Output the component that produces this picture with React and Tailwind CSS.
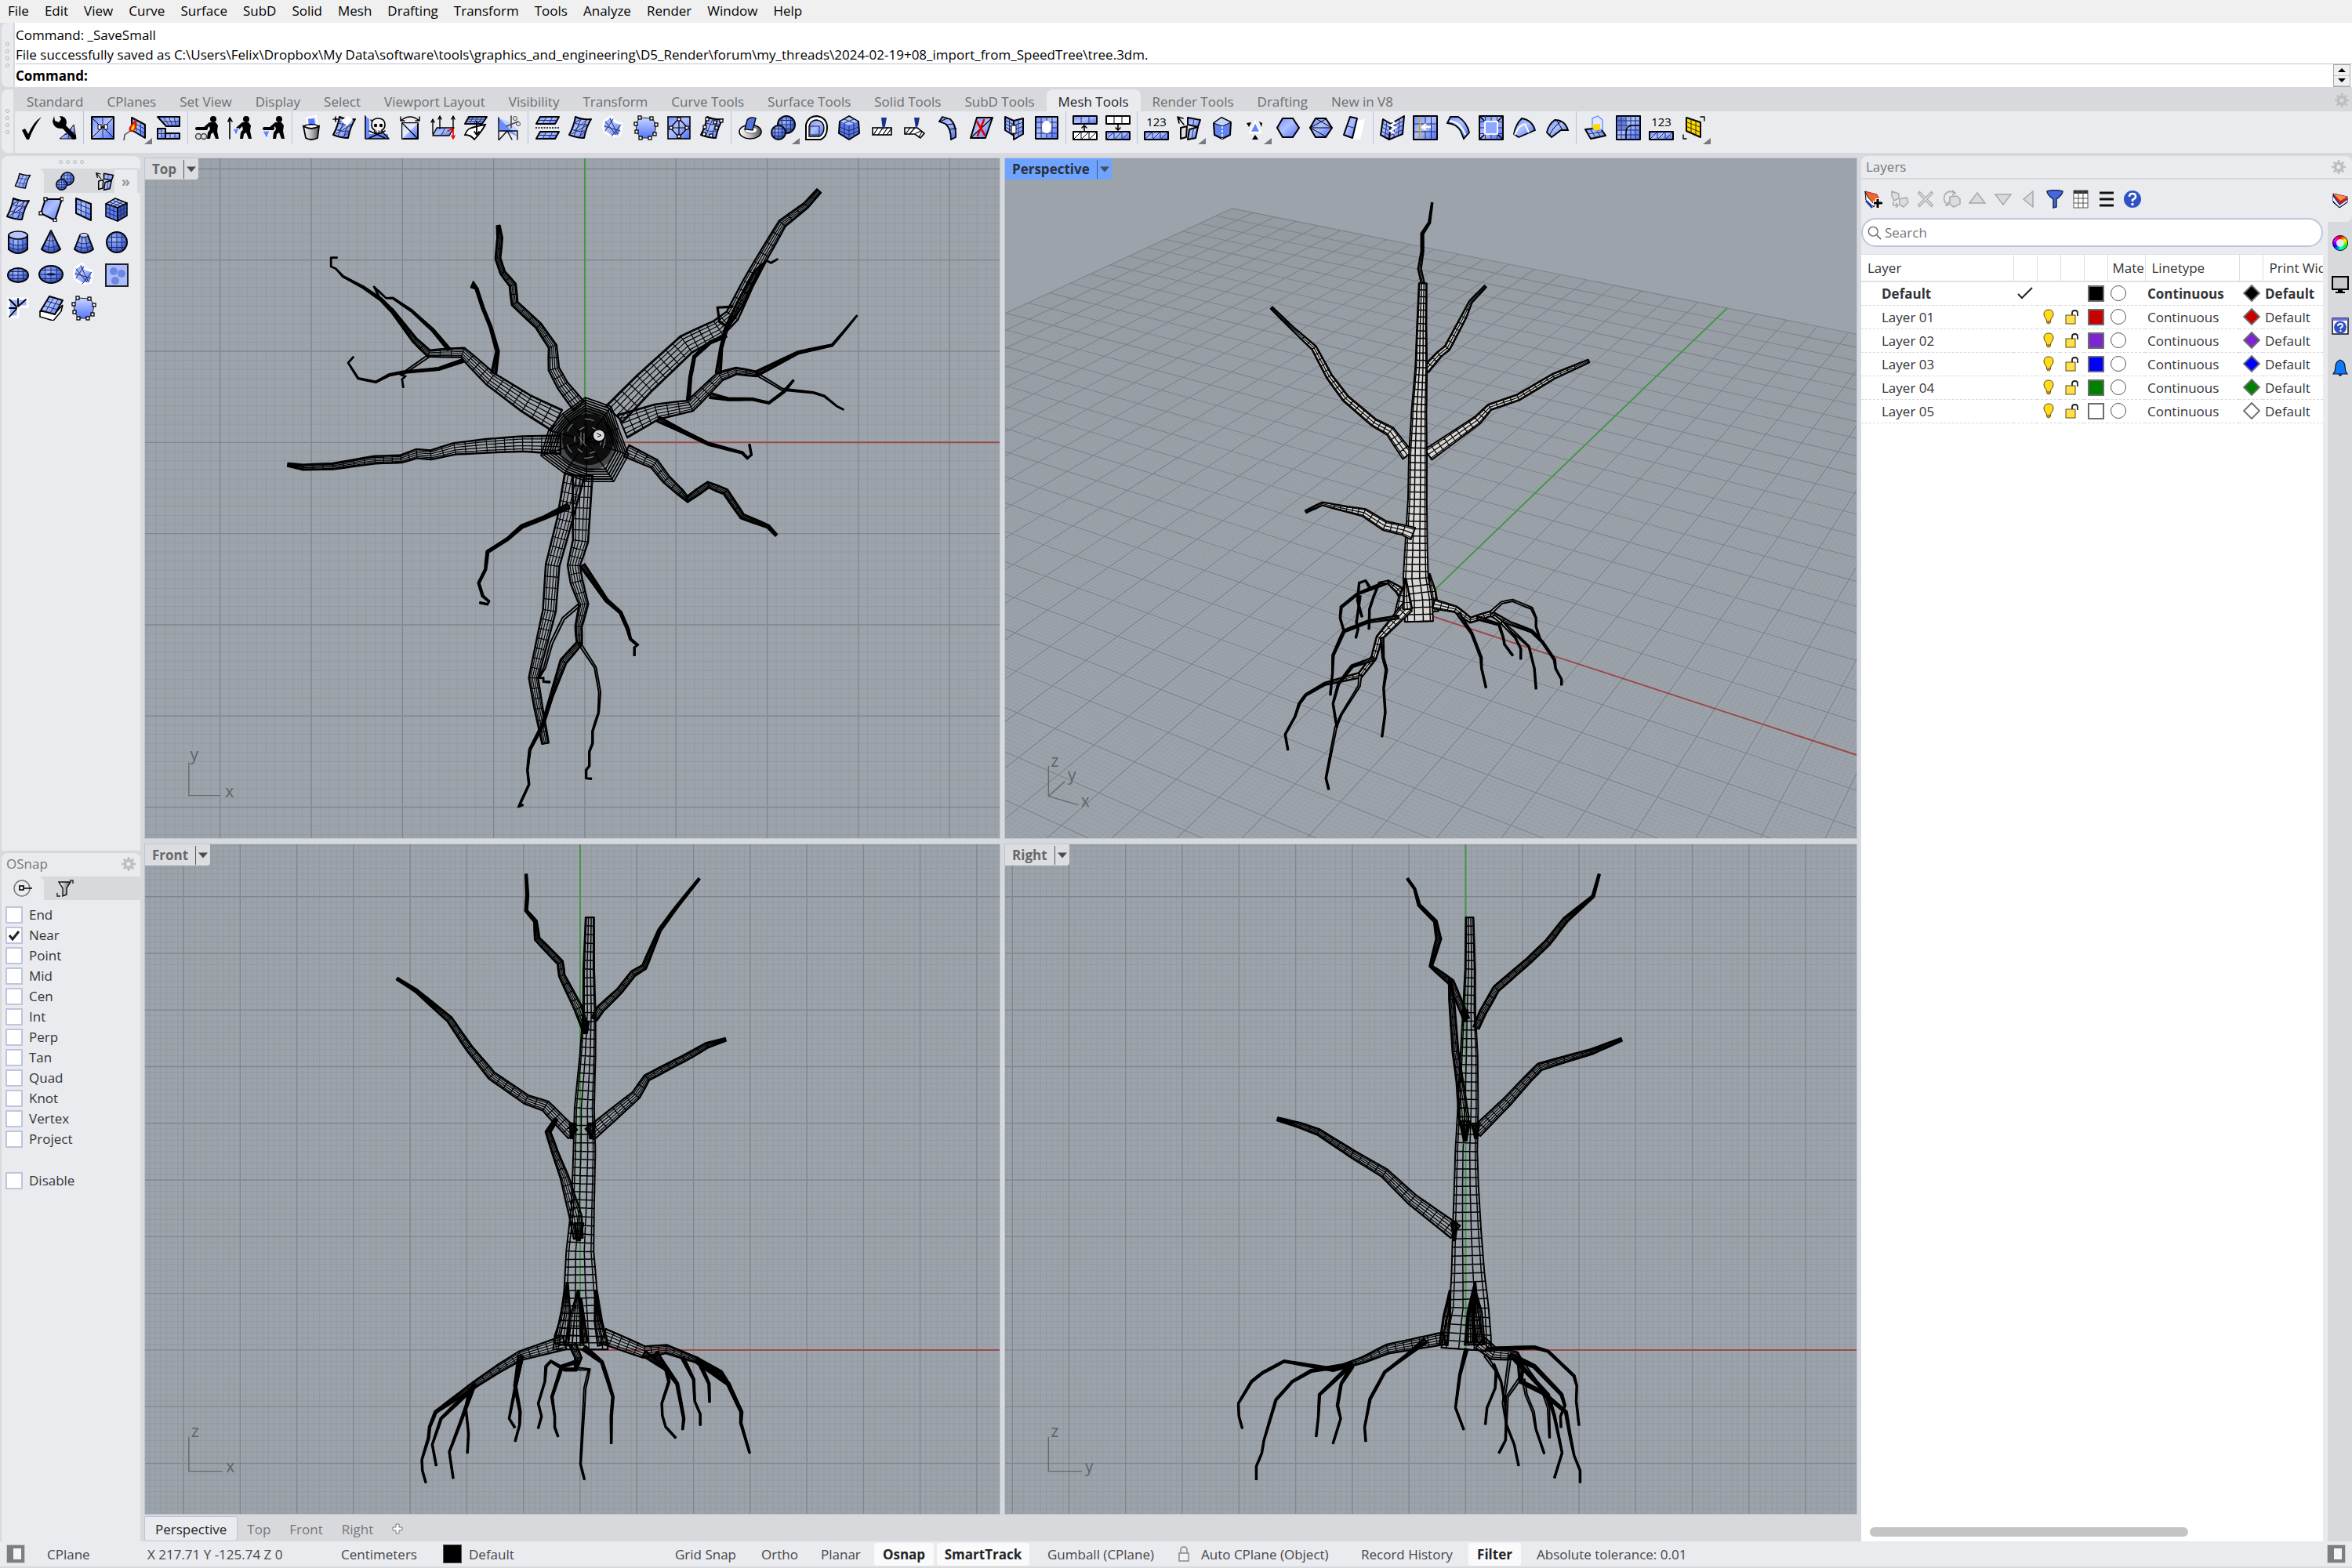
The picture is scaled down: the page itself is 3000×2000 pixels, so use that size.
import React from "react";

/* ---------- drawing helpers ---------- */

const lerp = (a, b, t) => a + (b - a) * t;
const bilerp = ([a, b, c, d], u, v) => [
  lerp(lerp(a[0], b[0], u), lerp(d[0], c[0], u), v),
  lerp(lerp(a[1], b[1], u), lerp(d[1], c[1], u), v),
];
const f1 = (n) => n.toFixed(1);
const seg = (a, b) => `M${f1(a[0])} ${f1(a[1])}L${f1(b[0])} ${f1(b[1])}`;

/* A quad covered with an n by m wire mesh */
function Quad({ p, n = 3, m = 3, fill = "url(#blue)", diag = false, sw = 2, line = "#1c2a66" }) {
  let d = "";
  for (let i = 1; i < n; i++) d += seg(bilerp(p, i / n, 0), bilerp(p, i / n, 1));
  for (let j = 1; j < m; j++) d += seg(bilerp(p, 0, j / m), bilerp(p, 1, j / m));
  if (diag)
    for (let i = 0; i < n; i++)
      for (let j = 0; j < m; j++) d += seg(bilerp(p, i / n, (j + 1) / m), bilerp(p, (i + 1) / n, j / m));
  return (
    <g>
      <polygon points={p.map((q) => q.join(",")).join(" ")} fill={fill} stroke="#000" strokeWidth={sw} strokeLinejoin="round" />
      <path d={d} stroke={line} strokeWidth="1" fill="none" />
    </g>
  );
}

const K = ({ d, w = 2, c = "#000", fill = "none" }) => (
  <path d={d} stroke={c} strokeWidth={w} fill={fill} strokeLinejoin="round" strokeLinecap="round" />
);
const Dots = ({ at }) => at.map(([x, y]) => <rect key={x + "_" + y} x={x - 2} y={y - 2} width="4" height="4" fill="#fff" stroke="#000" strokeWidth="1.3" />);
const rect = (x, y, w, h) => [[x, y], [x + w, y], [x + w, y + h], [x, y + h]];

const Sheet = ({ diag }) => (
  <g>
    <path d="M10 2 Q18 6 30 5 Q24 14 21 29 Q12 29 2 25 Q8 14 10 2Z" fill="url(#blue)" stroke="#000" strokeWidth="2" strokeLinejoin="round" />
    <path d="M17 5 Q12 16 8 27 M24 6 Q18 18 15 29 M8 10 Q16 13 26 12 M5 18 Q13 22 23 20" stroke="#1c2a66" fill="none" />
    {diag && <path d="M8 10L17 5M8 20L24 6M5 24L26 12M14 28L23 20" stroke="#1c2a66" />}
  </g>
);
const Ball = ({ cx = 16, cy = 16, rx = 13, ry = 13 }) => (
  <g>
    <ellipse cx={cx} cy={cy} rx={rx} ry={ry} fill="url(#ball)" stroke="#000" strokeWidth="2" />
    <path
      d={`M${cx} ${cy - ry}V${cy + ry}M${cx - rx / 2} ${cy - ry * 0.86}V${cy + ry * 0.86}M${cx + rx / 2} ${cy - ry * 0.86}V${cy + ry * 0.86}M${cx - rx} ${cy}H${cx + rx}M${cx - rx * 0.86} ${cy - ry / 2}H${cx + rx * 0.86}M${cx - rx * 0.86} ${cy + ry / 2}H${cx + rx * 0.86}`}
      stroke="#1c2a66"
      fill="none"
    />
  </g>
);
const Cube = ({ n = 3 }) => (
  <g>
    <Quad p={[[2, 9], [14, 2], [29, 8], [17, 14]]} n={n} m={n} fill="#bccaff" sw={1.6} />
    <Quad p={[[2, 9], [17, 14], [17, 31], [2, 25]]} n={n} m={n} fill="#5f80f0" sw={1.6} />
    <Quad p={[[17, 14], [29, 8], [29, 24], [17, 31]]} n={n} m={n} fill="#3a56b8" sw={1.6} />
  </g>
);
const Person = () => (
  <g>
    <circle cx="24" cy="5" r="4" />
    <path d="M19 9L27 9L30 13L29 20L31 30L27 30L24 22L21 24L20 30L16 30L17 22L20 18L19 14L14 19L11 16Z" />
  </g>
);
const Patch = () => <path d="M5 7L14 1L18 8L27 11L25 25L14 27L5 21L3 14Z" fill="url(#blue)" stroke="#fff" strokeWidth="3" strokeLinejoin="round" />;

const ICONS = {
  check: <path d="M4 19L8 17L12 24Q19 8 29 2Q19 14 13 31L10 31Z" />,
  wrench: (
    <g>
      <Quad p={[[28, 12], [31, 30], [10, 30], [22, 20]]} n={2} m={2} sw={1} />
      <path d="M3 1L4 7L9 9L12 5L10 1Q19 1 19 10L18 13L30 25Q33 31 27 31L14 17Q3 18 1 8Z" />
    </g>
  ),
  box: (
    <g>
      <Quad p={rect(2, 2, 28, 28)} n={2} m={1} />
      <K d="M3 4L15 16M3 28L15 16M29 4L17 16M29 28L17 16" w={1} />
      <rect x="10" y="12" width="4" height="6" fill="#fff" stroke="#000" />
      <rect x="18" y="12" width="4" height="6" fill="#fff" stroke="#000" />
      <K d="M14 15H18" w={1.5} />
    </g>
  ),
  flame: (
    <g>
      <Quad p={[[11, 3], [28, 12], [28, 29], [11, 19]]} />
      <path d="M16 5Q20 16 12 21Q6 22 8 15Z" fill="#e11900" />
      <path d="M14 11Q16 17 12 19Q9 19 11 15Z" fill="#ffd800" />
      <K d="M9 20L2 25L1 32" w={1.5} c="#444" />
    </g>
  ),
  reduce: (
    <g>
      <Quad p={[[2, 2], [30, 2], [30, 14], [13, 14]]} n={4} m={2} />
      <Quad p={rect(2, 17, 10, 13)} n={2} m={2} />
      <Quad p={rect(12, 23, 18, 7)} n={3} m={1} />
    </g>
  ),
  pushLink: (
    <g>
      <Person />
      <K d="M3 17H15" w={4} />
      <circle cx="5" cy="27" r="3.5" fill="#ddd" stroke="#444" strokeWidth="1.5" />
      <circle cx="12" cy="27" r="3.5" fill="#ddd" stroke="#444" strokeWidth="1.5" />
    </g>
  ),
  pushUp: (
    <g>
      <Person />
      <path d="M7 17H15L11 26Z" fill="#6486ff" stroke="#fff" />
      <K d="M3 30V5M1 8L3 3L6 8" w={1.6} />
    </g>
  ),
  push: (
    <g>
      <Person />
      <K d="M5 17H16" w={4} />
      <path d="M3 20H12L8 30Z" fill="#6486ff" stroke="#fff" />
    </g>
  ),
  bucket: (
    <g>
      <path d="M10 3L22 1L24 14L12 15Z" fill="#dfe6ff" stroke="#fff" strokeWidth="2" />
      <path d="M12 5L20 4L21 12L13 13Z" fill="#5577ff" />
      <path d="M6 14Q16 20 26 14L24 29Q16 33 9 29Z" fill="url(#metal)" stroke="#000" strokeWidth="1.8" />
      <path d="M6 14Q16 9 26 14" fill="none" stroke="#000" strokeWidth="1.4" />
    </g>
  ),
  addSheet: (
    <g>
      <Sheet diag />
      <path d="M12 7L20 1L27 5L20 14Z" fill="#fff" />
      <K d="M2 5H8M5 2V8" w={1.6} />
    </g>
  ),
  skull: (
    <g>
      <path d="M1 1L6 5L6 30H1Z" fill="#6a8cff" />
      <rect x="1" y="24" width="29" height="6" fill="#6a8cff" />
      <K d="M1 1V30H31L8 6M6 20L26 29M26 20L6 29" w={1.6} />
      <path d="M9 12Q9 4 17 4Q26 4 26 12Q26 17 22 19V23H13V19Q9 17 9 12Z" fill="#f4f4f4" stroke="#000" strokeWidth="1.6" />
      <circle cx="14" cy="13" r="2.2" />
      <circle cx="21" cy="13" r="2.2" />
      <K d="M15 20V23M18 20V23M20 20V23" w={1} />
    </g>
  ),
  flip: (
    <g>
      <Quad p={rect(6, 10, 20, 20)} n={1} m={1} />
      <path d="M6 10H26L6 30Z" fill="#fff" opacity=".7" />
      <K d="M6 10L26 30" w={1.2} />
      <K d="M4 7Q16 -3 28 7M28 2V7H23M4 2V7H9" w={1.4} />
    </g>
  ),
  normals: (
    <g>
      <Quad p={[[8, 16], [30, 16], [24, 26], [3, 26]]} n={2} m={1} sw={1.4} />
      <K d="M3 24V7M1 9L3 5L5 9M12 17V3M10 5L12 1L14 5M29 16V3M27 5L29 1L31 5" w={1.4} />
      <K d="M29 17V29M27 26L29 30L31 26M22 20L29 17" w={1.6} c="#e00" />
    </g>
  ),
  drape: (
    <g>
      <Quad p={[[7, 2], [30, 2], [24, 11], [2, 11]]} n={4} m={3} />
      <path d="M8 17Q16 14 28 12Q24 20 14 31Q10 25 2 25Q5 18 8 17Z" fill="#fff" stroke="#000" strokeWidth="1.8" />
      <K d="M17 8V24M14 21L17 25L20 21" w={1.8} />
    </g>
  ),
  cut: (
    <g>
      <path d="M4 4L27 28V18L16 8Z" fill="#c3cfff" />
      <path d="M2 2L4 19L14 21L27 27Z" fill="#6a8cff" />
      <K d="M3 3V31M3 20H27L14 20L3 32M27 20V31M14 20L20 31" w={1.3} />
      <K d="M19 1L19 16M28 8L13 14" w={1.6} c="#444" />
      <circle cx="28" cy="11" r="2.5" fill="none" stroke="#444" />
      <circle cx="24" cy="4" r="2.5" fill="none" stroke="#444" />
    </g>
  ),
  twoLayers: (
    <g>
      <Quad p={[[7, 2], [31, 2], [26, 11], [2, 11]]} n={3} m={2} />
      <path d="M1 16H31" stroke="#000" strokeWidth="1.6" strokeDasharray="2 1.5" />
      <Quad p={[[7, 21], [31, 21], [26, 30], [2, 30]]} n={3} m={2} />
    </g>
  ),
  sheet: <Sheet />,
  sheetDiag: <Sheet diag />,
  patch: (
    <g>
      <Patch />
      <K d="M6 8L20 25M6 20L16 5M14 27L26 12M5 14L25 20M12 4L22 25" w={1} c="#1c2a66" />
    </g>
  ),
  points: (
    <g>
      <path d="M8 3L24 4L29 12L27 23L21 29L9 29L4 21L3 11Z" fill="url(#blueV)" stroke="#222" strokeWidth="1" />
      <Dots at={[[8, 3], [23, 4], [29, 12], [27, 24], [21, 29], [9, 29], [4, 21], [3, 11]]} />
    </g>
  ),
  diamond: (
    <g>
      <rect x="2" y="2" width="28" height="28" fill="url(#blue)" stroke="#000" strokeWidth="1.6" />
      <K d="M16 4L27 16L16 28L5 16ZM16 5V27M5 16H27" w={1.2} />
      <Dots at={[[16, 5], [26, 16], [16, 27], [6, 16]]} />
    </g>
  ),
  sheetPoints: (
    <g>
      <Sheet />
      <Dots at={[[10, 5], [20, 9], [28, 7], [7, 15], [22, 16], [6, 24], [15, 26]]} />
    </g>
  ),
  ring: (
    <g>
      <ellipse cx="16" cy="21" rx="14" ry="9" fill="url(#metal)" stroke="#000" strokeWidth="1.6" />
      <ellipse cx="17" cy="19" rx="8" ry="4" fill="#fff" stroke="#666" />
      <path d="M12 6Q16 1 23 4L19 19L9 18Z" fill="#5373dd" stroke="#000" strokeWidth="1.4" />
    </g>
  ),
  balls: (
    <g>
      <Ball cx={20} cy={12} rx={11} ry={11} />
      <Ball cx={10} cy={22} rx={9} ry={9} />
    </g>
  ),
  offset: (
    <g>
      <path d="M3 12Q6 1 17 1Q30 3 30 16Q30 27 22 31H3Z" fill="#fff" stroke="#000" strokeWidth="2" />
      <path d="M7 14Q9 6 17 6Q26 8 26 16Q26 24 20 27H7Z" fill="url(#blue)" stroke="#000" strokeWidth="1.4" />
      <rect x="8" y="14" width="12" height="11" fill="none" stroke="#223" />
    </g>
  ),
  roundCube: (
    <g>
      <path d="M4 8L16 1L28 8L29 23L16 31L3 23Z" fill="#5877e8" stroke="#000" strokeWidth="2" strokeLinejoin="round" />
      <path d="M5 8L16 2L27 8L16 13Z" fill="#b5c4ff" />
      <K d="M16 13V30M10 11V27M22 11V27M4 15L16 20L28 15M4 20L16 25L28 20M10 5L22 10M22 5L10 10" w={1} c="#1c2a66" />
    </g>
  ),
  pinDown: (
    <g>
      <rect x="4" y="16" width="24" height="9" fill="#fff" stroke="#000" strokeWidth="1.6" />
      <K d="M5 25L11 16M11 25L17 16M17 25L23 16M22 25L28 17" w={1.2} />
      <path d="M15 3H22L20 14L17 19Z" fill="#1b2f8c" />
    </g>
  ),
  pinBend: (
    <g>
      <path d="M3 16H19L28 23L23 29L16 24H3Z" fill="#fff" stroke="#000" strokeWidth="1.6" />
      <K d="M4 24L10 16M9 24L16 16M17 23L24 20M21 28L25 21" w={1.2} />
      <path d="M15 3H22L20 13L17 17Z" fill="#1b2f8c" />
    </g>
  ),
  bend: (
    <g>
      <path d="M9 2L19 5Q27 12 26 28L20 31Q20 17 13 11L5 8Z" fill="url(#blue)" stroke="#000" strokeWidth="1.8" />
      <K d="M6 8L15 4M14 12L24 11M18 18L27 17" w={1} />
    </g>
  ),
  quadX: (
    <g>
      <Quad p={[[11, 3], [31, 3], [22, 29], [3, 29]]} n={1} m={1} />
      <K d="M3 29L31 3" w={1.2} />
      <K d="M11 8L21 25M20 6L12 26" w={2.6} c="#e00000" />
    </g>
  ),
  slab: (
    <g>
      <Quad p={[[5, 2], [16, 7], [16, 26], [5, 19]]} n={2} m={4} />
      <Quad p={[[16, 7], [28, 4], [28, 24], [16, 31]]} n={2} m={4} />
      <rect x="13" y="13" width="6" height="10" fill="#fff" stroke="#000" />
    </g>
  ),
  hole: (
    <g>
      <Quad p={rect(2, 2, 28, 28)} n={4} m={4} />
      <ellipse cx="16" cy="15" rx="6" ry="8" fill="#fff" />
    </g>
  ),
  up: (
    <g>
      <Quad p={rect(1, 1, 30, 10)} n={3} m={1} />
      <Quad p={rect(1, 21, 30, 10)} n={3} m={1} diag fill="#fff" line="#000" />
      <K d="M15 20V14M12 16L15 13L18 16" w={1.6} />
    </g>
  ),
  down: (
    <g>
      <Quad p={rect(1, 1, 30, 10)} n={3} m={1} fill="#fff" line="#000" />
      <Quad p={rect(1, 21, 30, 10)} n={3} m={1} diag />
      <K d="M16 12V18M13 16L16 19L19 16" w={1.6} />
    </g>
  ),
  count: (
    <g>
      <text x="16" y="14" textAnchor="middle" fontSize="15" fontFamily="Open Sans, sans-serif">123</text>
      <Quad p={rect(1, 21, 30, 10)} n={3} m={1} diag />
    </g>
  ),
  match: (
    <g>
      <Quad p={[[14, 3], [30, 6], [27, 15], [14, 12]]} n={2} m={1} />
      <Quad p={[[16, 18], [27, 15], [24, 29], [14, 31]]} n={2} m={1} />
      <Quad p={[[5, 16], [13, 14], [12, 28], [5, 30]]} n={1} m={1} fill="#ddd" />
      <K d="M3 10L1 2M1 2L8 4M1 2L9 12" w={1.6} />
    </g>
  ),
  dashCube: (
    <g>
      <path d="M5 10L15 3L27 9L26 25L16 30L6 25Z" fill="#6283f0" stroke="#000" strokeWidth="2" strokeLinejoin="round" />
      <path d="M5 10L15 3L27 9L16 14Z" fill="#c6d2ff" stroke="#000" />
      <path d="M16 14V30" stroke="#fff" strokeWidth="1.5" strokeDasharray="3 2" />
    </g>
  ),
  tri: (
    <g>
      <path d="M16 8L23 22H9Z" fill="#6486ff" stroke="#fff" strokeWidth="2.5" />
      <path d="M16 25L20 31H12ZM5 10L11 9L8 15ZM21 8L25 10L24 15Z" />
    </g>
  ),
  hex: <path d="M9 4H22L30 16L22 28H9L2 16Z" fill="url(#blue)" stroke="#000" strokeWidth="2" />,
  hexTri: (
    <g>
      <path d="M9 4H22L30 16L22 28H9L2 16Z" fill="url(#blue)" stroke="#000" strokeWidth="2" />
      <K d="M2 16H30M2 16L22 5M2 16L22 27M9 4L30 16" w={1} />
    </g>
  ),
  panel: (
    <g>
      <path d="M12 8L30 5L24 31L9 30Z" fill="#fff" />
      <Quad p={[[11, 2], [20, 4], [14, 29], [3, 25]]} n={1} m={2} />
    </g>
  ),
  unroll: (
    <g>
      <Quad p={[[4, 5], [14, 11], [12, 31], [1, 25]]} n={2} m={4} />
      <Quad p={[[14, 11], [31, 1], [29, 24], [12, 31]]} n={3} m={4} />
      <path d="M14 6L19 10L13 13L20 16L13 20L19 23" fill="none" stroke="#fff" strokeWidth="2.4" />
    </g>
  ),
  split: (
    <g>
      <Quad p={rect(1, 1, 30, 30)} n={4} m={3} />
      <path d="M9 2V30" stroke="#e3c000" strokeWidth="1.6" />
      <path d="M23 15H13M17 11L12 15L17 19" stroke="#fff" strokeWidth="2.4" fill="none" />
    </g>
  ),
  arc: (
    <g>
      <path d="M6 2H16Q27 9 30 22L23 30L19 20Q14 11 2 10Z" fill="url(#blue)" stroke="#000" strokeWidth="1.8" />
      <path d="M5 7Q19 9 25 25" stroke="#fff" strokeWidth="2.2" fill="none" />
    </g>
  ),
  frame: (
    <g>
      <Quad p={rect(1, 1, 30, 30)} n={4} m={4} />
      <rect x="8" y="8" width="16" height="16" fill="#8fa8ff" stroke="#fff" strokeWidth="1.8" />
      <K d="M2 2L7 7M30 2L25 7M2 30L7 25M30 30L25 25" w={1.6} />
    </g>
  ),
  fin: (
    <g>
      <path d="M13 4Q26 6 30 19L21 23L9 28L3 24Q5 12 13 4Z" fill="url(#blue)" stroke="#000" strokeWidth="1.8" />
      <path d="M4 25Q9 13 17 11M17 11L22 22" fill="none" stroke="#fff" strokeWidth="2" />
    </g>
  ),
  finGrid: (
    <g>
      <path d="M13 6Q26 6 30 19L21 19L9 28L3 22Q5 12 13 6Z" fill="url(#blue)" stroke="#000" strokeWidth="1.8" />
      <K d="M6 26Q11 15 21 8M16 7L23 19" w={1} />
    </g>
  ),
  boxSheet: (
    <g>
      <Quad p={[[3, 18], [22, 16], [29, 26], [10, 30]]} n={3} m={2} />
      <path d="M12 4L19 1L25 6V18L17 20L12 16Z" fill="#e3e9ff" stroke="#6a8cff" strokeWidth="1.4" />
      <path d="M11 12L22 11L22 18L15 20Z" fill="#ffd800" />
    </g>
  ),
  gridCurve: (
    <g>
      <Quad p={rect(1, 1, 30, 30)} n={5} m={5} />
      <path d="M13 30V22Q13 13 22 13H30" fill="none" stroke="#000" strokeWidth="1.4" />
      <path d="M3 3H12V20H3Z" fill="#2c46a8" opacity=".5" />
    </g>
  ),
  yellow: (
    <g>
      <Quad p={[[6, 3], [24, 9], [24, 28], [6, 20]]} fill="#ffdc00" line="#443300" />
      <K d="M24 2H29V7M2 25V30H6" w={1.4} />
    </g>
  ),
  poly: (
    <g>
      <path d="M9 3L30 3L21 30L3 21Z" fill="url(#blue)" stroke="#000" strokeWidth="2" />
      <Dots at={[[9, 3], [30, 3], [21, 30], [3, 21]]} />
    </g>
  ),
  plane: <Quad p={[[6, 2], [25, 9], [25, 30], [6, 21]]} />,
  cube: <Cube />,
  cylinder: (
    <g>
      <path d="M4 7V25Q16 35 28 25V7Z" fill="url(#ball)" stroke="#000" strokeWidth="2" />
      <ellipse cx="16" cy="7" rx="12" ry="5" fill="#b8c6ff" stroke="#000" strokeWidth="1.6" />
      <K d="M10 12V29M16 12V30M22 12V29M4 17Q16 24 28 17M4 22Q16 29 28 22" w={1} c="#1c2a66" />
    </g>
  ),
  cone: (
    <g>
      <path d="M16 1L28 25Q16 34 4 25Z" fill="url(#ball)" stroke="#000" strokeWidth="2" strokeLinejoin="round" />
      <K d="M16 2L12 29M16 2L21 29M11 13Q16 16 21 13M7 20Q16 25 25 20" w={1} c="#1c2a66" />
    </g>
  ),
  coneCut: (
    <g>
      <path d="M11 7L4 25Q16 34 28 25L21 7Z" fill="url(#ball)" stroke="#000" strokeWidth="2" strokeLinejoin="round" />
      <ellipse cx="16" cy="7" rx="5" ry="2.5" fill="#cbd6ff" stroke="#000" />
      <K d="M14 9L12 29M18 9L21 29M8 16Q16 20 24 16M6 21Q16 26 26 21" w={1} c="#1c2a66" />
    </g>
  ),
  sphere: <Ball />,
  ellipsoid: <Ball rx={13} ry={9} />,
  torus: (
    <g>
      <Ball cy={15} rx={15} ry={11} />
      <path d="M9 15Q16 11 23 15Q16 18 9 15Z" fill="#0b1a55" />
    </g>
  ),
  height: (
    <g>
      <rect x="2" y="2" width="28" height="28" fill="#a9bcff" stroke="#222" strokeWidth="2" />
      <circle cx="12" cy="11" r="5" fill="#4a64c8" opacity=".6" />
      <circle cx="22" cy="14" r="5" fill="#4a64c8" opacity=".6" />
      <circle cx="14" cy="23" r="5" fill="#4a64c8" opacity=".6" />
    </g>
  ),
  lPatch: (
    <g>
      <path d="M4 4H28V14H16V27H4Z" fill="#9db2ff" stroke="#fff" strokeWidth="3" />
      <K d="M5 5L14 14M16 4V13M16 14L26 5M5 16H14M5 27L14 17" w={1.8} />
    </g>
  ),
  stack: (
    <g>
      <path d="M2 20L22 22L31 12L29 20L19 32L2 27Z" fill="#fff" stroke="#000" strokeWidth="1.6" />
      <Quad p={[[14, 1], [31, 6], [21, 24], [3, 19]]} n={3} m={3} />
    </g>
  ),
};

function Icon({ name, className = "size-8" }) {
  return (
    <svg viewBox="0 0 32 32" className={className} aria-hidden="true">
      {ICONS[name]}
    </svg>
  );
}

function Gradients() {
  return (
    <svg className="absolute size-0" aria-hidden="true">
      <defs>
        <linearGradient id="blue" x1="0" y1="0" x2="1" y2="1">
          <stop offset="0" stopColor="#6f8fff" />
          <stop offset=".45" stopColor="#b0c1ff" />
          <stop offset="1" stopColor="#4a6cf5" />
        </linearGradient>
        <linearGradient id="blueV" x1="0" y1="0" x2="0" y2="1">
          <stop offset="0" stopColor="#c8d4ff" />
          <stop offset="1" stopColor="#5578ff" />
        </linearGradient>
        <radialGradient id="ball" cx=".4" cy=".35" r=".7">
          <stop offset="0" stopColor="#a9bbff" />
          <stop offset=".6" stopColor="#5b7be6" />
          <stop offset="1" stopColor="#2c459c" />
        </radialGradient>
        <linearGradient id="metal" x1="0" y1="0" x2="1" y2="0">
          <stop offset="0" stopColor="#fff" />
          <stop offset=".5" stopColor="#bbb" />
          <stop offset="1" stopColor="#555" />
        </linearGradient>
      </defs>
    </svg>
  );
}

/* ---------- tree geometry ---------- */

const parse = (text) => {
  let w = 4;
  return text
    .trim()
    .split(/\s+/)
    .map((t) => {
      const [x, y, ww] = t.split(",").map(Number);
      if (ww) w = ww;
      return [x, y, w];
    });
};

/* Tapered tube drawn as long edges plus cross rings; thin ends collapse to a solid line */
function tube(text, map, lines, step) {
  const raw = parse(text).map(([x, y, w]) => [...map(x, y), w < 7 ? Math.max(0.8, w * 0.9 - 1.2) : w]);
  const pts = [];
  raw.forEach((p, i) => {
    if (i === raw.length - 1) return pts.push(p);
    const q = raw[i + 1];
    const k = Math.max(1, Math.round(Math.hypot(q[0] - p[0], q[1] - p[1]) / step));
    for (let j = 0; j < k; j++) pts.push([lerp(p[0], q[0], j / k), lerp(p[1], q[1], j / k), lerp(p[2], q[2], j / k)]);
  });
  const nrm = pts.map((p, i) => {
    const a = pts[Math.max(0, i - 1)];
    const b = pts[Math.min(pts.length - 1, i + 1)];
    const l = Math.hypot(b[0] - a[0], b[1] - a[1]) || 1;
    return [-(b[1] - a[1]) / l, (b[0] - a[0]) / l];
  });
  const side = (s) => pts.map((p, i) => [p[0] + (nrm[i][0] * p[2] * s) / 2, p[1] + (nrm[i][1] * p[2] * s) / 2]);
  const poly = (q) => "M" + q.map((c) => f1(c[0]) + " " + f1(c[1])).join("L");
  const left = side(-1);
  const right = side(1);
  let inner = "";
  if (Math.max(...pts.map((p) => p[2])) > 4)
    for (let k = 1; k < lines; k++) inner += poly(side(-Math.cos((Math.PI * k) / lines)));
  pts.forEach((p, i) => {
    if (p[2] > 5) inner += seg(left[i], right[i]);
  });
  return { body: poly([...left, ...right.slice().reverse()]) + "Z", inner };
}

function Tubes({ list, map, fill, lines, step, width }) {
  return list.map((b, i) => {
    const t = tube(b, map, lines, step);
    return (
      <g key={i}>
        <path d={t.body} fill={fill} strokeWidth="2" />
        <path d={t.inner} fill="none" strokeWidth={width} />
      </g>
    );
  });
}

function Tree({ trunk = [], branches, map, fill = "none", step = 11, lines = 7 }) {
  return (
    <g strokeLinejoin="round" strokeLinecap="round" stroke="#000">
      <Tubes list={branches} map={map} fill={fill} lines={lines} step={step} width="1.2" />
      <Tubes list={trunk} map={map} fill={fill} lines={5} step={step} width="1.5" />
    </g>
  );
}

const mapper = (ox, oy, sx, sy) => (x, y) => [ox + x * sx, oy + y * sy];

const TOP = [
  "870,590,30 945,515,28 1050,420,26 1130,380,22 1165,350,18 1205,270,15 1245,200,13 1290,125,11 1350,80,8 1382,45,7",
  "780,570,18 740,520,15 718,480,14 715,425,11 680,375,9 620,320,9 615,275,9 590,245,7 578,210,7 583,160,7 579,130,6",
  "568,490,7 577,437,6 560,378,5 540,330,5 525,285,5 516,268,3 512,280 528,285",
  "725,605,30 650,565,24 560,505,18 490,440,13 405,442,9 370,410,7 315,340,6 285,310,5 240,280,4 190,254,3 172,235,2 160,230 160,208 175,208",
  "455,432,6 415,385,5 362,338,4 315,307,3 298,307,2 268,279 285,312",
  "490,460,6 430,480,5 340,488,4 305,495,4 272,512,3 228,503 203,465,2 216,451",
  "405,448,5 335,495,4 347,498,2 338,505 341,525",
  "735,665,24 640,663,20 550,668,18 470,675,15 410,690,12 375,687,12 335,700,10 270,702,10 165,718,8 90,720,7 52,714,6",
  "890,620,32 975,585,20 1060,570,15 1135,498,12 1175,485,9 1225,492,7 1330,440,5 1415,422,4 1445,388,3 1477,350,2",
  "1225,492,5 1290,530,4 1368,538,3 1395,546 1428,572,2 1443,579",
  "1110,545,7 1155,554,5 1215,554,4 1257,563,4 1295,535,4 1318,508,3",
  "1055,555,6 1060,500,5 1070,450,5 1110,415,5 1150,400,4",
  "1130,490,7 1137,430,5 1150,380,6 1185,320,9 1225,245,7 1250,215,2 1262,221 1278,212",
  "1165,328,3 1128,330 1133,365 1150,375",
  "980,603,7 1040,632,6 1105,663,5 1190,685,4 1203,698,4 1213,690,3 1208,665",
  "900,680,16 970,712,13 1000,750,11 1053,798,8 1105,763,8 1148,780,8 1190,840,7 1255,865,6 1275,886,5",
  "770,740,26 745,850,20 715,960,18 707,1070,17 690,1140,15 667,1235,12 680,1310,11 697,1395,9",
  "790,740,26 785,900,20 768,960,16 775,1000,16 793,1055,12 780,1110,9 782,1150,8 742,1195,9 712,1280,6 690,1350,5 658,1410,4 652,1460,3 656,1495 637,1535 630,1550 640,1545",
  "782,1150,5 822,1210,4 833,1270,4 830,1320,3 815,1365 815,1395 807,1415 807,1450 799,1460 799,1480 812,1481",
  "780,1058,5 742,1090,5 712,1150,5 695,1210,4 680,1235,3 692,1235 692,1244 708,1245",
  "755,815,7 695,843,6 638,865,6 603,895,5 552,927,5 547,970,4 530,1003,4 540,1035,4 556,1048,3 552,1055 533,1051",
  "790,960,7 850,1045,6 885,1075,5 903,1115,5 910,1140,4 928,1155,4 920,1160,3 920,1180",
];
const TOP_RING = [[797, 550], [862, 572], [880, 625], [905, 690], [868, 755], [800, 755], [745, 735], [686, 692], [705, 630], [740, 590]];

const FRONT_TRUNK = [
  "816,181,11 814,300,14 815,400,16 812,500,20 806,620,25 806,720,28 803,850,29 798,950,35 799,1040,42 800,1110,54 799,1145,66 799,1176,70",
];
const FRONT = [
  "808,440,8 795,390,11 765,315,8 762,285,8 720,230,7 717,190,6 700,165,5 702,130,5 700,82,4",
  "824,415,8 835,392,10 870,350,8 895,310,8 915,295,7 943,210,6 975,155,5 1015,92,4",
  "785,680,16 735,615,14 700,600,12 637,545,11 595,480,9 560,415,8 500,350,6 465,322,5",
  "816,680,18 900,590,12 920,550,9 1000,497,8 1030,475,7 1063,462,6",
  "795,920,12 790,870,16 770,780,11 752,720,8 740,675,7 755,645,6",
  "808,448,6 809,420,8", "783,690,5 785,655,8", "818,690,5 819,655,10", "795,925,6 796,885,12",
  "775,1022,3 772,1090,12 764,1165,18", "795,1040,3 790,1100,14 788,1165,24", "826,1040,3 830,1110,8 840,1165,14", "800,1060,3 806,1160,9",
  "770,1160,18 690,1190,12 650,1220,10 608,1255,8 535,1320,5 524,1355,4 522,1380,4 510,1430,3 511,1455 517,1482",
  "608,1258,6 545,1335,4 529,1395,3 536,1443", "605,1258,6 580,1345,4 560,1412,3 567,1472", "597,1270,5 590,1310,3 595,1370 593,1414",
  "690,1190,7 680,1260,5 689,1320,4 688,1350,3 680,1387", "690,1200,6 680,1265,4 669,1335,3 679,1355",
  "785,1165,9 795,1195,9 790,1222,6 770,1222,5 745,1203,4 736,1215,4 734,1250,3 722,1300 728,1330 722,1357",
  "795,1203,6 765,1215,5 747,1285,4 752,1330,3 752,1355 758,1376", "790,1220,4 815,1222,4 807,1265,4 799,1440,3 806,1475",
  "805,1172,7 838,1205,5 847,1240,5 858,1285,4 855,1330,4 855,1392,3",
  "840,1145,20 915,1182,15 955,1175,11 1010,1200,7 1055,1228,5 1068,1255,5 1092,1320,5 1091,1345,4 1107,1414,3",
  "915,1185,8 955,1222,5 960,1250,4 947,1300,3 948,1328 954,1354 972,1379", "935,1185,7 975,1255,5 987,1335,4 985,1360,3",
  "985,1195,6 1005,1245,4 1007,1295,3 1017,1325 1017,1350", "1015,1205,6 1033,1255,4 1034,1297,3", "1010,1200,7 1068,1255,6 1092,1320,4",
];

const RIGHT_TRUNK = [
  "856,181,10 857,300,13 855,400,16 855,500,22 853,620,26 850,720,28 850,800,31 851,900,36 853,1000,42 855,1080,50 852,1140,60 850,1176,64",
];
const RIGHT = [
  "850,415,8 822,330,8 785,293,6 799,230,7 793,190,6 763,152,5 755,115,4 742,92,4",
  "868,435,8 880,400,9 905,345,9 965,280,8 1000,238,8 1032,187,7 1083,132,5 1094,82,4",
  "868,675,15 925,605,12 965,550,10 985,525,10 1030,508,8 1080,490,7 1135,462,6",
  "830,905,20 750,830,15 700,770,12 640,725,10 578,675,8 545,660,7 503,645,6",
  "848,695,6 845,640,13 838,560,9 830,490,8 823,370,7 820,322,5",
  "848,690,5 849,650,12", "868,690,5 867,655,10", "828,925,4 828,885,8", "849,420,4 847,395,8",
  "820,1040,3 814,1100,9 808,1165,11", "866,1022,3 862,1090,14 864,1165,24", "866,1040,3 870,1090,12 874,1165,14", "864,1050,3 858,1100,8 860,1160,14",
  "810,1150,16 705,1175,12 660,1200,8 605,1222,6 515,1203,4 475,1230,4 455,1250,4 431,1300,3 432,1330 438,1357",
  "640,1210,6 565,1225,5 530,1250,4 500,1292,4 478,1385,3 474,1415 464,1445 464,1475", "635,1215,6 580,1280,4 578,1330,3 574,1376",
  "640,1215,6 620,1255,4 613,1305,4 619,1335,3 605,1392", "775,1155,7 740,1190,5 700,1228,4 673,1290,4 663,1355,3 665,1387",
  "850,1175,6 838,1235,4 830,1310,3 845,1360",
  "875,1160,18 900,1185,16 940,1190,11 950,1210,8 950,1250,6 990,1275,6 1033,1320,5 1040,1370,4 1048,1420,3 1059,1455 1059,1482",
  "890,1175,6 975,1171,5 1000,1180,4 1048,1237,4 1053,1260,3 1052,1295 1057,1350", "930,1190,7 975,1215,6 1025,1280,5 1031,1305,4 1023,1330,3 1024,1355",
  "940,1200,6 1000,1280,5 1012,1330,4 1026,1414,3 1012,1471", "885,1190,5 905,1225,4 903,1265,3 888,1310 885,1348",
  "930,1190,5 918,1300,4 924,1350,3 938,1395 946,1443", "900,1210,4 914,1250,3 920,1295", "950,1240,5 925,1285,4 922,1385,3 910,1414",
  "955,1245,5 960,1280,4 973,1320,4 978,1360,3 993,1415", "955,1210,5 990,1270,4 1001,1310 1003,1379,3",
];

const PERSP_TRUNK = ["770,288,10 768,380,12 767,480,15 763,580,19 761,680,23 760,780,24 758,880,28 757,960,32 762,1010,35 763,1058,36"];
const PERSP_BACK = [
  "740,1010,12 725,985,9 706,968,6 650,995,4 620,1025,4 618,1050,3 625,1080", "706,968,5 690,970,3 680,1000 672,1030 671,1075",
  "658,1047,3 650,1010 653,970 665,965 672,980,4", "655,1000,3 648,1060 651,1075 647,1095",
  "742,960,3 735,1000,12 730,1040,16", "782,950,3 788,990,8 792,1035,10",
];
const PERSP = [
  "770,288,6 764,255,6 769,215,5 769,175,5 782,150,4 787,105,3",
  "775,485,10 800,450,8 815,435,8 845,365,7 858,330,6 885,295,5",
  "780,678,16 870,600,11 893,570,8 945,548,8 1010,500,7 1075,465,6",
  "742,680,15 710,625,12 680,605,10 628,550,9 598,500,8 570,435,7 530,390,6 492,344,5",
  "790,1018,12 830,1030,8 857,1055,7 895,1040,7 930,1062,6 970,1080,5 990,1105,4 1012,1145 1014,1165,3 1025,1190 1025,1202",
  "895,1038,5 915,1015,4 935,1010 970,1028 978,1050,3 978,1070 986,1100", "835,1040,6 860,1085,4 877,1140 878,1165,3 886,1208",
  "900,1045,5 935,1080,4 965,1115,3 975,1165 978,1211", "870,1050,6 910,1065,4 918,1095,3 920,1110 935,1135", "915,1060,5 940,1095,3 950,1120 950,1143",
];
const PERSP_OVER = [
  "752,858,16 735,850,13 700,840,12 662,810,10 630,802,7 585,790,6 555,808,5",
  "742,1025,15 690,1095,8 680,1140,7 655,1180,7 590,1200,5 555,1225,4 543,1245,4 535,1275,3 517,1315 522,1350",
  "655,1180,5 653,1205,4 620,1270,3 610,1300,4 592,1415,3 597,1440", "680,1143,6 640,1160,5 615,1200,4 605,1245,3 610,1285 612,1298",
  "695,1095,6 697,1140,4 703,1168 698,1210,3 701,1265 695,1320", "725,1048,6 670,1058,5 625,1080,5 605,1135,4 604,1175,3 600,1225",
  "738,960,3 740,1000,8 742,1030,12",
];

/* ---------- viewports ---------- */

const GREEN = "#46964a";
const RED = "#9b4a4c";

function FlatGrid({ box, cx, cy, major }) {
  const [x0, y0, w, h] = box;
  const x1 = x0 + w;
  const y1 = y0 + h;
  let minorD = "";
  let majorD = "";
  const s = major / 10;
  for (let i = Math.ceil((x0 - cx) / s); cx + i * s < x1; i++) {
    const d = `M${f1(cx + i * s)} ${y0}V${y1}`;
    i % 10 ? (minorD += d) : (majorD += d);
  }
  for (let i = Math.ceil((y0 - cy) / s); cy + i * s < y1; i++) {
    const d = `M${x0} ${f1(cy + i * s)}H${x1}`;
    i % 10 ? (minorD += d) : (majorD += d);
  }
  return (
    <g fill="none">
      <path d={minorD} stroke="#929ba1" />
      <path d={majorD} stroke="#83868e" strokeWidth="1.4" />
      <path d={`M${cx} ${y0}V${cy}`} stroke={GREEN} strokeWidth="2" />
      <path d={`M${cx} ${cy}H${x1}`} stroke={RED} strokeWidth="2" />
    </g>
  );
}

const ground = (u, v) => {
  const w = 1 - 0.013434 * u + 0.023816 * v;
  return [(25.605 * u + 72.53 * v + 1803.5) / w, (5.8248 * u - 9.929 * v + 779.2) / w];
};

function GroundGrid() {
  let minorD = "";
  let majorD = "";
  for (let i = -200; i <= 200; i++) {
    const t = i / 10;
    const d = seg(ground(t, -20), ground(t, 20)) + seg(ground(-20, t), ground(20, t));
    i % 10 ? (minorD += d) : (majorD += d);
  }
  return (
    <g fill="none">
      <path d={minorD} stroke="#80888f" strokeOpacity=".28" strokeWidth=".8" />
      <path d={majorD} stroke="#7f828b" strokeWidth="1.1" />
      <path d={seg(ground(0, 0), ground(0, 20))} stroke={GREEN} strokeWidth="2" />
      <path d={seg(ground(0, 0), ground(20, 0))} stroke={RED} strokeWidth="2" />
    </g>
  );
}

function Gizmo({ d, labels }) {
  return (
    <g>
      <path d={d} stroke="#666a6e" strokeWidth="1.4" fill="none" />
      <g fontFamily="Open Sans, sans-serif" fontSize="21" fill="#5f6367" textAnchor="middle">
        {labels.map(([t, x, y]) => (
          <text key={t} x={x} y={y}>{t}</text>
        ))}
      </g>
    </g>
  );
}

function Viewport({ name, active, box, children }) {
  return (
    <section aria-label={name} className="relative min-h-0 min-w-0 overflow-hidden border border-[#bcc4d8] bg-[#9da3aa]">
      <svg className="absolute inset-0 size-full" viewBox={box.join(" ")} preserveAspectRatio="xMidYMid slice" aria-hidden="true">
        {children}
      </svg>
      <button
        className={
          "absolute left-0 top-0 flex h-[27px] items-center rounded-br-sm pl-[9px] text-[17px] font-bold leading-none " +
          (active ? "bg-[#6ea3ff] text-[#2b3038]" : "bg-[#dcdde0] text-[#66686b]")
        }
      >
        <span className="pr-[9px]">{name}</span>
        <span className="flex h-6 items-center border-l border-[#55585c] px-[3px]">
          <svg viewBox="0 0 10 6" className="h-2 w-3 fill-[#4a4d50]">
            <path d="M0 0H10L5 6Z" />
          </svg>
        </span>
      </button>
    </section>
  );
}

const TOP_BOX = [184, 202, 1092, 869];
const FRONT_BOX = [184, 1077, 1092, 855];
const PERSP_BOX = [1281, 202, 1089, 869];
const RIGHT_BOX = [1281, 1077, 1089, 855];

function Viewports() {
  const top = mapper(340, 220, 0.5102, 0.523);
  const front = mapper(180, 1070, 0.7015, 0.5548);
  const right = mapper(1280, 1070, 0.6952, 0.5548);
  const persp = mapper(1280, 200, 0.6952, 0.5612);
  const ringPath = (k) => {
    const c = [800, 655];
    return "M" + TOP_RING.map(([x, y]) => top(lerp(c[0], x, k), lerp(c[1], y, k)).map(f1).join(" ")).join("L") + "Z";
  };
  return (
    <div className="grid min-h-0 flex-1 grid-cols-[1093fr_1089fr] grid-rows-[870fr_856fr] gap-x-[5px] gap-y-1.5">
      <Viewport name="Top" box={TOP_BOX}>
        <FlatGrid box={TOP_BOX} cx={746} cy={565} major={116.5} />
        <Tree branches={TOP} map={top} step={13} />
        <path d={[1, 0.94, 0.88, 0.82, 0.76, 0.7].map(ringPath).join("")} fill="none" stroke="#000" strokeWidth="1.8" />
        <path d={TOP_RING.map(([x, y]) => seg(top(x, y), top(800, 655))).join("")} stroke="#000" strokeWidth="1.6" />
        <ellipse cx="749" cy="561" rx="40" ry="41" fill="#000" fillOpacity=".55" />
        <circle cx="750" cy="561" r="33" fill="#000" fillOpacity=".8" />
        <circle cx="747" cy="560" r="25" fill="none" stroke="#777c82" strokeWidth="1.2" strokeDasharray="12 17" />
        <circle cx="750" cy="562" r="17" fill="none" stroke="#8b9096" strokeWidth="1.2" strokeDasharray="7 10" />
        <path d="M741 552V568M745 553V566M738 558L748 570" fill="none" stroke="#8b9096" />
        <circle cx="764" cy="556" r="8" fill="#d8dadd" stroke="#000" strokeWidth="2" />
        <path d="M761 553L767 556L762 558" fill="none" stroke="#000" />
        <Gizmo d="M240 974V1016H280" labels={[["y", 247, 971], ["x", 292, 1018]]} />
      </Viewport>
      <Viewport name="Perspective" active box={PERSP_BOX}>
        <GroundGrid />
        <Tree branches={PERSP_BACK} map={persp} fill="#cfd0d2" step={9} lines={4} />
        <Tree branches={PERSP} trunk={PERSP_TRUNK} map={persp} fill="#d9d7d6" step={9} lines={4} />
        <Tree branches={PERSP_OVER} map={persp} fill="#d9d7d6" step={9} lines={4} />
        <Gizmo d="M1337 978V1017L1358 998M1337 1017L1375 1028" labels={[["z", 1345, 979], ["y", 1367, 997], ["x", 1384, 1030]]} />
      </Viewport>
      <Viewport name="Front" box={FRONT_BOX}>
        <FlatGrid box={FRONT_BOX} cx={740} cy={1723} major={72.4} />
        <Tree branches={FRONT} trunk={FRONT_TRUNK} map={front} />
        <Gizmo d="M240 1834V1878H283" labels={[["z", 248, 1834], ["x", 293, 1879]]} />
      </Viewport>
      <Viewport name="Right" box={RIGHT_BOX}>
        <FlatGrid box={RIGHT_BOX} cx={1870} cy={1723} major={72.4} />
        <Tree branches={RIGHT} trunk={RIGHT_TRUNK} map={right} />
        <Gizmo d="M1337 1834V1878H1380" labels={[["z", 1345, 1834], ["y", 1389, 1879]]} />
      </Viewport>
    </div>
  );
}

/* ---------- chrome ---------- */

const MENU = ["File", "Edit", "View", "Curve", "Surface", "SubD", "Solid", "Mesh", "Drafting", "Transform", "Tools", "Analyze", "Render", "Window", "Help"];
const TABS = ["Standard", "CPlanes", "Set View", "Display", "Select", "Viewport Layout", "Visibility", "Transform", "Curve Tools", "Surface Tools", "Solid Tools", "SubD Tools", "Mesh Tools", "Render Tools", "Drafting", "New in V8"];

/* "|" is a separator; a trailing "*" marks a button with a fly-out */
const TOOLBAR = "check wrench | box flame* reduce | pushLink pushUp push | bucket addSheet skull flip normals drape cut | twoLayers sheetDiag patch points diamond sheetPoints | ring balls* offset roundCube pinDown pinBend bend quadX slab hole | up down | count match* dashCube tri* hex hexTri panel | unroll split arc frame fin finGrid | boxSheet gridCurve count yellow*".split(" ");
const PALETTE = ["sheetDiag", "poly", "plane", "cube", "cylinder", "cone", "coneCut", "sphere", "ellipsoid", "torus", "patch", "height", "lPatch", "stack", "points"];

const Gear = ({ className = "size-5" }) => (
  <svg viewBox="0 0 20 20" className={className} aria-hidden="true">
    <circle cx="10" cy="10" r="5" fill="none" stroke="#bdbec0" strokeWidth="4" />
    <path d="M10 0V4M10 16V20M0 10H4M16 10H20M3 3L6 6M14 14L17 17M17 3L14 6M6 14L3 17" stroke="#bdbec0" strokeWidth="3" />
  </svg>
);

function Grip({ vertical }) {
  return (
    <div className={"flex items-center justify-center gap-1 " + (vertical ? "w-[15px] flex-col rounded-l-lg bg-[#e9ebef]" : "h-[14px]")}>
      {[0, 1, 2, 3].map((i) => (
        <span key={i} className="size-[5px] rounded-full border border-[#b4b6b9]" />
      ))}
    </div>
  );
}

function CommandArea() {
  return (
    <div className="flex h-[82px] gap-[2px] pl-[2px]">
      <Grip vertical />
      <div className="relative flex min-w-0 flex-1 flex-col bg-white pl-px">
        <div className="flex h-[52px] flex-col whitespace-nowrap pt-[3px] leading-[25px]">
          <span>Command: _SaveSmall</span>
          <span>File successfully saved as C:\Users\Felix\Dropbox\My Data\software\tools\graphics_and_engineering\D5_Render\forum\my_threads\2024-02-19+08_import_from_SpeedTree\tree.3dm.</span>
        </div>
        <label className="flex h-[30px] items-center border-t border-[#bcc4d8] font-bold">
          Command:
          <input className="ml-2 min-w-0 flex-1 bg-transparent font-normal outline-none" aria-label="Command" />
        </label>
        <div className="absolute bottom-0 right-[2px] flex h-[29px] w-[22px] flex-col border border-[#a6a8ab] bg-[#f0f0f0]">
          {["M0 5H10L5 0Z", "M0 0H10L5 5Z"].map((d) => (
            <button key={d} aria-label={d[3] === "5" ? "Previous" : "Next"} className="flex flex-1 items-center justify-center border-b border-[#c9cacc]">
              <svg viewBox="0 0 10 5" className="h-[5px] w-[10px]"><path d={d} /></svg>
            </button>
          ))}
        </div>
      </div>
    </div>
  );
}

function Toolbars() {
  return (
    <div className="flex h-[81px] gap-[2px] pl-[2px]">
      <Grip vertical />
      <div className="flex min-w-0 flex-1 flex-col">
        <div className="flex h-7 items-stretch pr-1 text-[#6b6d70]" role="tablist">
          {TABS.map((t) => (
            <button key={t} role="tab" className={"whitespace-nowrap rounded-t-lg px-[15px] pt-[2px] leading-none " + (t === "Mesh Tools" ? "bg-[#e9ebef] text-[#222427]" : "")}>
              {t}
            </button>
          ))}
          <span className="ml-auto flex items-center"><Gear className="size-[18px]" /></span>
        </div>
        <div className="flex flex-1 items-start bg-[#e9ebef]">
          {TOOLBAR.map((t, i) =>
            t === "|" ? (
              <span key={i} className="mx-[3px] h-[42px] w-px bg-[#bcc4d8]" />
            ) : (
              <button key={i} aria-label={t.replace("*", "")} className="relative flex h-[42px] w-[42px] items-center justify-center">
                <Icon name={t.replace("*", "")} />
                {t.endsWith("*") && (
                  <svg viewBox="0 0 10 8" className="absolute bottom-0 right-0 h-2 w-[10px] fill-[#77797c]"><path d="M10 0V8H0Z" /></svg>
                )}
              </button>
            )
          )}
        </div>
      </div>
    </div>
  );
}

const SNAPS = ["End", "Near", "Point", "Mid", "Cen", "Int", "Perp", "Tan", "Quad", "Knot", "Vertex", "Project"];

function Snap({ name }) {
  return (
    <label className="flex h-[26px] items-center gap-2 pl-[5px] text-[#333538]">
      <span className="relative flex size-[22px] items-center justify-center">
        <input type="checkbox" defaultChecked={name === "Near"} className="peer size-[22px] appearance-none border-2 border-[#bdc6de] bg-white" />
        <svg viewBox="0 0 16 14" className="pointer-events-none absolute hidden h-[14px] w-4 peer-checked:block">
          <path d="M2 7L6 12L14 2" fill="none" stroke="#222" strokeWidth="3" />
        </svg>
      </span>
      {name}
    </label>
  );
}

function LeftPanel() {
  return (
    <aside className="flex w-[177px] shrink-0 flex-col gap-[3px]">
      <div className="flex shrink-0 grow-[884] basis-[884px] flex-col rounded-t-lg bg-[#e9ebef]">
        <Grip />
        <div className="mt-[2px] flex h-[31px] items-stretch bg-[#d8d9dc]">
          <button aria-label="Mesh" className="flex w-[54px] items-center justify-center rounded-tr-lg bg-[#e9ebef]"><Icon name="sheet" className="size-[22px]" /></button>
          <button aria-label="SubD" className="flex w-[54px] items-center justify-center"><Icon name="balls" className="size-6" /></button>
          <button aria-label="Tools" className="flex w-9 items-center justify-end overflow-hidden"><Icon name="match" className="size-6" /></button>
          <button aria-label="More" className="w-[29px] border-t border-[#bcc4d8] bg-[#e9ebef] text-lg font-bold leading-none text-[#96989b]">»</button>
        </div>
        <div className="grid grid-cols-4 pr-[9px]">
          {PALETTE.map((n, i) => (
            <button key={i} aria-label={n} className="flex h-[42px] items-center justify-center"><Icon name={n} /></button>
          ))}
        </div>
      </div>
      <div className="flex shrink-0 grow-[880] basis-[876px] flex-col rounded-t-lg bg-[#e9ebef]">
        <h2 className="flex h-7 items-center justify-between px-[6px] text-[#75777a]">
          OSnap <Gear className="size-[18px]" />
        </h2>
        <div className="mb-[6px] mt-[2px] flex h-[30px] items-stretch bg-[#d8d9dc]">
          <button aria-label="Snaps" className="flex w-[54px] items-center justify-center rounded-tr-lg bg-[#e9ebef]">
            <svg viewBox="0 0 24 22" className="h-[22px] w-6"><circle cx="11" cy="11" r="10" fill="none" stroke="#777" strokeWidth="1.5" /><rect x="8" y="8" width="5" height="5" fill="#fff" stroke="#000" strokeWidth="1.6" /><path d="M13 11H24" stroke="#000" strokeWidth="1.5" /></svg>
          </button>
          <button aria-label="Filter" className="flex w-[54px] items-center justify-center">
            <svg viewBox="0 0 22 22" className="size-[22px]"><path d="M3 3H18L13 11V19L8 21V11Z" fill="url(#metal)" stroke="#111" strokeWidth="1.4" /><path d="M17 1H21V5M1 17V21H5" fill="none" stroke="#222" strokeWidth="1.4" /></svg>
          </button>
        </div>
        {SNAPS.map((s) => <Snap key={s} name={s} />)}
        <div className="mt-[27px]"><Snap name="Disable" /></div>
      </div>
    </aside>
  );
}

/* ---------- layers ---------- */

const LAYERS = [
  ["Default", "#000000"],
  ["Layer 01", "#c80000"],
  ["Layer 02", "#7d26cd"],
  ["Layer 03", "#0000ff"],
  ["Layer 04", "#008000"],
  ["Layer 05", "#ffffff"],
];

const LAYER_TOOLS = [
  ["New layer", <g key="a"><path d="M1 2L16 6L20 14L12 22L2 13Z" fill="#f0652f" stroke="#a33" /><path d="M1 2L2 13L12 22L12 18L4 9Z" fill="#fff" stroke="#123" /><path d="M2 14L10 23" stroke="#1f3aa0" strokeWidth="2.5" /><path d="M17 11V23M11 17H23" stroke="#fff" strokeWidth="6" /><path d="M17 12V23M12 17H23" stroke="#000" strokeWidth="3" /></g>],
  ["New sublayer", <g key="a" fill="#dcdde0" stroke="#a9abad" strokeWidth="1.5"><path d="M2 2L11 5V11L5 14L2 8ZM12 12L21 10L23 16L17 22L12 19Z" /><path d="M4 15V20H10M7 17L10 20L7 23" fill="none" /></g>],
  ["Delete", <g key="a" fill="none"><path d="M3 3L21 21M21 3L3 21" stroke="#a9abad" strokeWidth="4" /><path d="M4 4L20 20M20 4L4 20" stroke="#dcdde0" strokeWidth="1.6" /></g>],
  ["Duplicate", <g key="a" fill="none" stroke="#a9abad" strokeWidth="1.6"><path d="M10 9L19 8L23 12V18L15 22L10 18Z" fill="#dcdde0" /><path d="M16 4Q8 0 4 6Q0 14 8 20M8 20H4M8 20V15M13 1L17 4L13 7" /></g>],
  ["Move up", <path key="a" d="M12 4L22 17H2Z" fill="#d9dadc" stroke="#a6a8aa" strokeWidth="1.5" />],
  ["Move down", <path key="a" d="M12 19L2 6H22Z" fill="#d9dadc" stroke="#a6a8aa" strokeWidth="1.5" />],
  ["Move left", <path key="a" d="M5 12L17 2V22Z" fill="#d9dadc" stroke="#a6a8aa" strokeWidth="1.5" />],
  ["Filter", <path key="a" d="M2 2Q12 -1 22 2Q22 6 14 12V22L10 23V12Q2 6 2 2Z" fill="#4668d8" stroke="#16245c" strokeWidth="1.5" />],
  ["Columns", <g key="a"><rect x="3" y="1" width="18" height="22" fill="#fff" stroke="#555" /><rect x="3" y="1" width="18" height="4" fill="#333" /><path d="M9 1V23M15 1V23M3 11H21M3 17H21" stroke="#555" /></g>],
  ["Menu", <path key="a" d="M3 4H21M3 12H21M3 20H21" stroke="#111" strokeWidth="3" />],
  ["Help", <g key="a"><circle cx="12" cy="12" r="11" fill="#2f52c4" /><path d="M8 9Q8 5 12 5Q16 5 16 9Q16 11 12 13V15" fill="none" stroke="#fff" strokeWidth="2.6" /><circle cx="12" cy="18.5" r="1.7" fill="#fff" /></g>],
];

const Bulb = () => (
  <svg viewBox="0 0 14 20" className="mx-auto h-5 w-[14px]" role="img" aria-label="On">
    <path d="M7 1Q13 1 13 7Q13 10 10 13L9 18Q7 20 5 18L4 13Q1 10 1 7Q1 1 7 1Z" fill="#ffdb1a" stroke="#5c4c12" />
    <path d="M5 15H9L8 19H6Z" fill="#b47a2c" />
  </svg>
);
const Lock = () => (
  <svg viewBox="0 0 18 20" className="mx-auto h-5 w-[18px]" role="img" aria-label="Unlocked">
    <rect x="1" y="8" width="12" height="11" fill="#ffe04a" stroke="#5c4c12" />
    <path d="M9 8V5Q9 2 12.5 2Q16 2 16 5V9" fill="none" stroke="#222" strokeWidth="1.8" />
  </svg>
);

function LayersPanel() {
  const head = "border-r border-[#dbe1e8] p-0 font-normal text-left overflow-hidden whitespace-nowrap ";
  return (
    <section aria-label="Layers" className="flex w-[626px] shrink-0 flex-col">
      <h2 className="flex h-7 items-center justify-between rounded-t-lg bg-[#e9ebef] pl-[6px] pr-2 text-[#75777a]">
        Layers <Gear className="size-[18px]" />
      </h2>
      <div className="mt-[2px] flex min-h-0 flex-1">
        <div className="flex min-w-0 flex-1 flex-col bg-[#e9ebef] pr-[6px]">
          <div className="flex h-[49px] items-center gap-[9px] pl-1">
            {LAYER_TOOLS.map(([n, d]) => (
              <button key={n} aria-label={n} className="size-6"><svg viewBox="0 0 24 24" className="size-6">{d}</svg></button>
            ))}
          </div>
          <label className="flex h-[37px] items-center gap-1 rounded-full border-2 border-[#bdc6de] bg-white pl-[6px]">
            <svg viewBox="0 0 20 20" className="size-[18px]"><circle cx="8" cy="8" r="6.5" fill="none" stroke="#666" strokeWidth="1.5" /><path d="M13 13L19 19" stroke="#666" strokeWidth="1.8" /></svg>
            <input type="search" placeholder="Search" aria-label="Search" className="min-w-0 flex-1 bg-transparent outline-none placeholder:text-[#75777a]" />
          </label>
          <div className="mt-[9px] flex min-h-0 flex-1 flex-col overflow-hidden border-t border-[#dbe1e8] bg-white">
            <table className="w-full table-fixed border-collapse text-[#333538]">
              <colgroup>
                <col />
                <col className="w-[30px]" />
                <col className="w-[30px]" />
                <col className="w-[30px]" />
                <col className="w-[30px]" />
                <col className="w-[48px]" />
                <col className="w-[120px]" />
                <col className="w-[30px]" />
                <col className="w-[77px]" />
              </colgroup>
              <thead>
                <tr className="h-[34px] border-b-2 border-[#dbe1e8]">
                  <th className={head + "pl-2"}>Layer</th>
                  <th className={head} aria-label="Current" />
                  <th className={head} aria-label="On" />
                  <th className={head} aria-label="Lock" />
                  <th className={head} aria-label="Color" />
                  <th className={head + "pl-[6px]"}>Mate</th>
                  <th className={head + "pl-2"}>Linetype</th>
                  <th className={head} aria-label="Print Color" />
                  <th className="overflow-hidden whitespace-nowrap p-0 pl-2 text-left font-normal">Print Wid</th>
                </tr>
              </thead>
              <tbody>
                {LAYERS.map(([name, color], i) => (
                  <tr key={name} className={"h-[30px] border-b border-dashed border-[#d5dae2] leading-none " + (i === 0 ? "font-bold" : "")}>
                    <td className="p-0 pl-[26px]">{name}</td>
                    <td className="p-0">
                      {i === 0 && <svg viewBox="0 0 20 16" className="mx-auto h-4 w-5"><path d="M1 9L6 14L19 1" fill="none" stroke="#222" strokeWidth="2" /></svg>}
                    </td>
                    <td className="p-0">{i > 0 && <Bulb />}</td>
                    <td className="p-0">{i > 0 && <Lock />}</td>
                    <td className="p-0"><span className="mx-auto block size-[21px] border-2 border-[#6d6d6d]" style={{ backgroundColor: color }} /></td>
                    <td className="p-0"><span className="ml-[4px] block size-5 rounded-full border border-[#555]" /></td>
                    <td className="p-0 pl-[3px]">Continuous</td>
                    <td className="p-0">
                      <svg viewBox="0 0 22 22" className="ml-[5px] size-[22px]"><path d="M11 1L21 11L11 21L1 11Z" fill={color} stroke="#6d6d6d" strokeWidth="1.8" /></svg>
                    </td>
                    <td className="overflow-hidden p-0 pl-[3px]">Default</td>
                  </tr>
                ))}
              </tbody>
            </table>
            <div className="mb-1.5 ml-[11px] mt-auto h-3 w-[406px] rounded-full bg-[#c4c4c4]" />
          </div>
        </div>
        <nav aria-label="Panels" className="flex w-[31px] shrink-0 flex-col">
          <button aria-label="Layers" className="flex h-[54px] items-center justify-center rounded-br-lg bg-[#e9ebef]">
            <svg viewBox="0 0 20 20" className="size-5"><path d="M1 1L19 5V12L9 19L1 12Z" fill="#1f3aa0" stroke="#000" /><path d="M1 5L9 16L19 9V11L9 18L1 10Z" fill="#fff" /><path d="M1 1L9 14L19 8V5Z" fill="#d81e05" /><path d="M1 1L19 5L10 10Z" fill="#ff8a50" /></svg>
          </button>
          <button aria-label="Color" className="flex h-[53px] items-center justify-center">
            <span className="flex size-5 items-center justify-center rounded-full border border-black bg-[conic-gradient(#f00,#ff0,#0f0,#0ff,#00f,#f0f,#f00)]"><span className="size-2.5 rounded-full bg-[#e4e5e8]" /></span>
          </button>
          <button aria-label="Display" className="flex h-[53px] items-center justify-center">
            <svg viewBox="0 0 22 22" className="size-[22px]"><rect x="1" y="1" width="20" height="16" fill="#c9c9c9" stroke="#000" strokeWidth="2" /><path d="M8 18H14V20H17V22H5V20H8Z" /></svg>
          </button>
          <button aria-label="Help" className="flex h-[53px] items-center justify-center">
            <svg viewBox="0 0 22 22" className="size-[22px]"><rect x="1" y="1" width="20" height="20" fill="#fff" stroke="#112" strokeWidth="1.5" /><rect x="1" y="1" width="20" height="3" fill="#6d6fe0" /><circle cx="11" cy="12.5" r="8" fill="#2f52c4" /><path d="M8 11Q8 8 11 8Q14 8 14 10.5Q14 12 11.5 13V14.5" fill="none" stroke="#fff" strokeWidth="1.8" /><circle cx="11.5" cy="17" r="1.2" fill="#fff" /></svg>
          </button>
          <button aria-label="Notifications" className="flex h-[53px] items-center justify-center">
            <svg viewBox="0 0 22 22" className="size-[22px]"><path d="M11 1Q17 3 17 10Q17 15 20 19H2Q5 15 5 10Q5 3 11 1Z" fill="#0a7bff" stroke="#111" strokeWidth="1.2" /><path d="M8 19.5H14L11 22Z" /></svg>
          </button>
        </nav>
      </div>
    </section>
  );
}

const PaneIcon = () => (
  <svg viewBox="0 0 24 24" className="size-6"><rect width="24" height="24" fill="#c9cacc" /><rect x="1" y="1" width="22" height="22" fill="#7d7e80" /><rect x="9" y="5" width="10" height="14" fill="#f4f5f8" /></svg>
);

function StatusBar() {
  const pill = "mx-[2px] h-[29px] rounded bg-[#fafafb] font-bold text-[#222427]";
  return (
    <footer className="mb-[2px] flex h-8 items-center whitespace-nowrap bg-[#e9ebef] px-2 leading-none text-[#45474a]">
      <button className="w-[52px]" aria-label="Left sidebar"><PaneIcon /></button>
      <button className="w-[128px] text-left">CPlane</button>
      <span className="w-[247px]">X 217.71 Y -125.74 Z 0</span>
      <button className="w-[130px] text-left">Centimeters</button>
      <button className="flex w-[296px] items-center gap-[9px]"><span className="size-6 border border-[#555] bg-black" />Default</button>
      <button className="w-[110px] text-left">Grid Snap</button>
      <button className="w-[76px] text-left">Ortho</button>
      <button className="w-[66px] text-left">Planar</button>
      <button className={pill + " w-[76px]"}>Osnap</button>
      <button className={pill + " w-[118px]"}>SmartTrack</button>
      <button className="ml-[21px] w-[166px] text-left">Gumball (CPlane)</button>
      <button className="flex w-[234px] items-center gap-[14px]">
        <svg viewBox="0 0 16 20" className="h-5 w-4"><rect x="2" y="9" width="12" height="10" fill="#f2f2f2" stroke="#888" strokeWidth="1.5" /><path d="M4 9V5Q4 1 8 1Q12 1 12 5V9" fill="none" stroke="#888" strokeWidth="1.5" /></svg>
        Auto CPlane (Object)
      </button>
      <button className="w-[135px] text-left">Record History</button>
      <button className={pill + " w-[67px]"}>Filter</button>
      <span className="ml-[18px]">Absolute tolerance: 0.01</span>
      <button className="ml-auto" aria-label="Right sidebar"><PaneIcon /></button>
    </footer>
  );
}

export default function App() {
  return (
    <div className="flex h-screen flex-col overflow-hidden bg-[#d8d9dc] font-['Open_Sans','Noto_Sans',sans-serif] text-[17px] text-black">
      <Gradients />
      <nav aria-label="Main menu" className="flex h-[29px] shrink-0 items-center bg-[#f0f0f0] pb-[2px]">
        {MENU.map((m) => (
          <button key={m} className="px-[10px] leading-none">{m}</button>
        ))}
      </nav>
      <CommandArea />
      <div className="mt-[3px]"><Toolbars /></div>
      <div className="mt-1 flex min-h-0 flex-1 pl-[2px]">
        <LeftPanel />
        <main className="ml-[5px] mr-[5px] mt-[2px] flex min-w-0 flex-1 flex-col">
          <Viewports />
          <div className="mt-[2px] flex h-8 items-stretch text-[#75777a]" role="tablist">
            <button role="tab" className="rounded-b border border-[#bcc4d8] bg-[#e9ebef] px-[13px] leading-none text-[#222427]">Perspective</button>
            {["Top", "Front", "Right"].map((t) => (
              <button key={t} role="tab" className="px-3 leading-none">{t}</button>
            ))}
            <button aria-label="Add layout" className="px-3">
              <svg viewBox="0 0 14 14" className="size-[14px]"><path d="M5 1H9V5H13V9H9V13H5V9H1V5H5Z" fill="#fff" stroke="#777" /></svg>
            </button>
          </div>
        </main>
        <LayersPanel />
      </div>
      <StatusBar />
    </div>
  );
}
